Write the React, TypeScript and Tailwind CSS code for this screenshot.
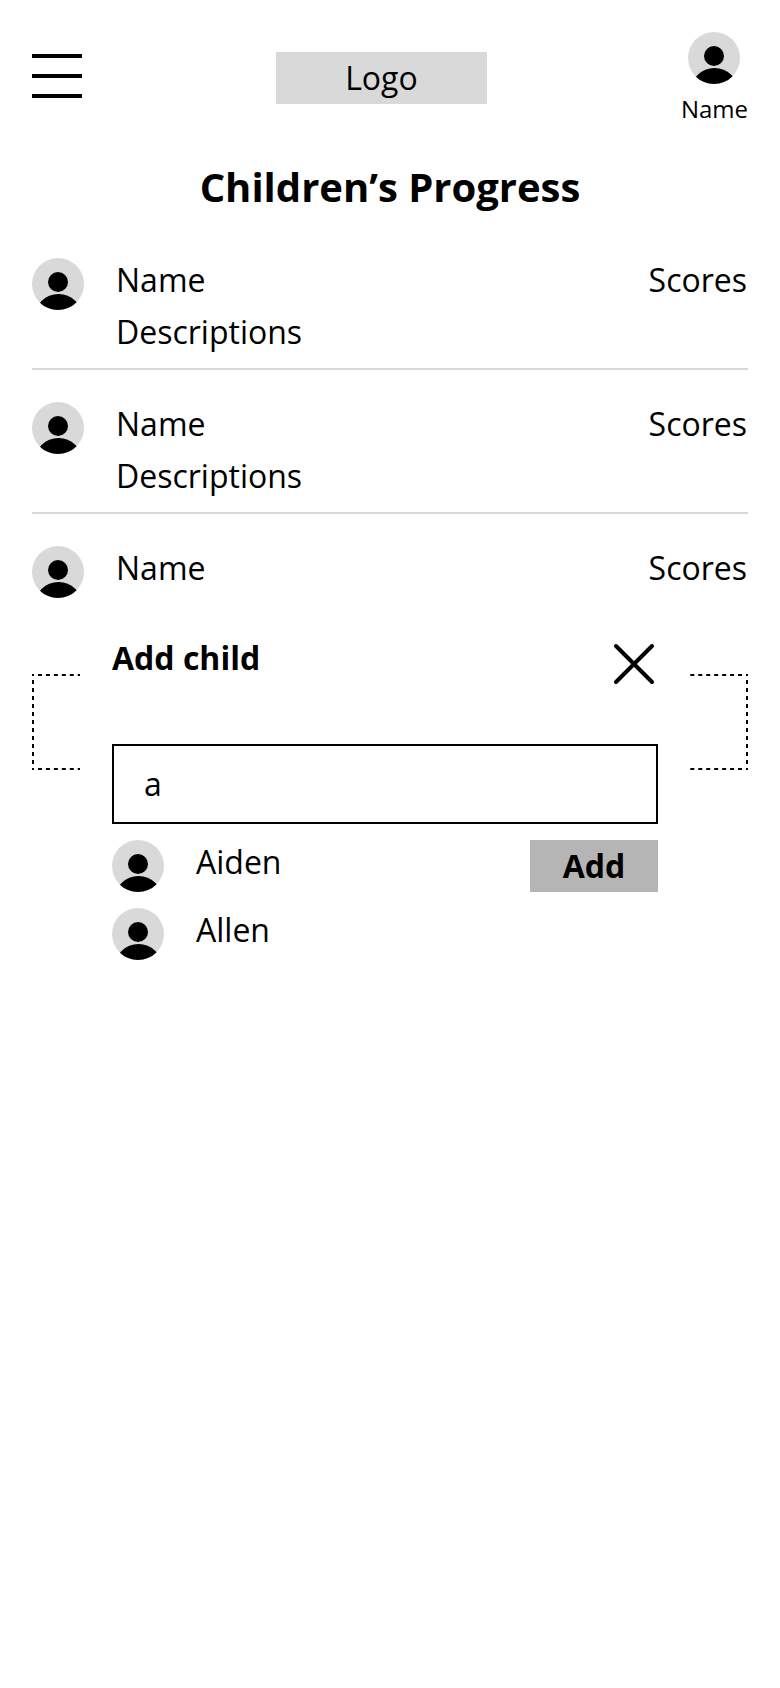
const children = [
  { id: 1, name: "Name", description: "Descriptions", score: "Scores" },
  { id: 2, name: "Name", description: "Descriptions", score: "Scores" },
  { id: 3, name: "Name", description: "", score: "Scores" },
];

function Avatar({ id }: { id: string }) {
  return (
    <svg className="size-[52px] shrink-0" viewBox="0 0 52 52" aria-hidden="true">
      <clipPath id={id}>
        <circle cx="26" cy="26" r="26" />
      </clipPath>
      <circle cx="26" cy="26" r="26" fill="#d9d9d9" />
      <circle cx="26" cy="24" r="10" fill="#000" />
      <circle cx="26.5" cy="60" r="24" fill="#000" clipPath={`url(#${id})`} />
    </svg>
  );
}

function Header() {
  return (
    <header className="flex h-[92px] items-center justify-between">
      <button aria-label="Menu" className="mb-1 flex w-[50px] flex-col gap-4">
        <span className="h-1 w-full bg-black" />
        <span className="h-1 w-full bg-black" />
        <span className="h-1 w-full bg-black" />
      </button>
      <div className="flex h-[52px] w-[211.5px] items-center justify-center bg-[#d9d9d9]">Logo</div>
      <div className="flex h-[92px] flex-col items-center gap-2">
        <Avatar id="user" />
        <span className="text-2xl leading-[34px]">Name</span>
      </div>
    </header>
  );
}

// Short dashes with a half dash meeting at every corner.
function DashedSlot() {
  return (
    <svg className="mt-8 h-24 w-full" viewBox="0 0 716 96" stroke="#000" strokeWidth="2" aria-hidden="true">
      <path d="M0 1H716M0 95H716" strokeDasharray="4 3.9556" strokeDashoffset="2" />
      <path d="M1 0V96M715 0V96" strokeDasharray="4 4" strokeDashoffset="2" />
    </svg>
  );
}

function AddChildDialog() {
  return (
    <section
      role="dialog"
      aria-label="Add child"
      className="absolute top-[608px] left-20 flex w-[610px] flex-col bg-white p-8"
    >
      <div className="flex h-12 justify-between">
        <h2 className="font-bold leading-9">Add child</h2>
        <button aria-label="Close" className="size-12">
          <svg viewBox="0 0 48 48" className="size-12" stroke="#000" strokeWidth="4" strokeLinecap="round">
            <path d="M6 6L42 42M42 6L6 42" />
          </svg>
        </button>
      </div>
      <input
        defaultValue="a"
        className="mt-14 h-20 w-full border-2 border-black bg-white px-[30px] pb-px outline-none"
      />
      <ul className="mt-4 flex flex-col gap-4">
        <li className="flex h-[52px] items-start">
          <Avatar id="aiden" />
          <span className="ml-8 grow leading-[44px]">Aiden</span>
          <button className="h-[52px] w-32 bg-[#b5b5b5] font-bold">Add</button>
        </li>
        <li className="flex h-[52px] items-start">
          <Avatar id="allen" />
          <span className="ml-8 grow leading-[44px]">Allen</span>
        </li>
      </ul>
    </section>
  );
}

export default function App() {
  return (
    <main className="relative h-[1688px] w-[780px] bg-white px-8 pt-8 font-['Open_Sans',sans-serif] text-[32px] leading-[44px] text-black">
      <Header />
      <h1 className="mt-9 text-center text-[40px] leading-[54px] font-bold">Children’s Progress</h1>
      <ul className="mt-11 flex flex-col gap-8">
        {children.map((child) => (
          <li
            key={child.id}
            className="flex h-28 items-start border-b-2 border-[#d9d9d9] last:h-24 last:border-b-0"
          >
            <Avatar id={`child-${child.id}`} />
            <div className="ml-8 flex grow flex-col gap-2">
              <span>{child.name}</span>
              <span>{child.description}</span>
            </div>
            <span className="pr-px">{child.score}</span>
          </li>
        ))}
      </ul>
      <DashedSlot />
      <AddChildDialog />
    </main>
  );
}
